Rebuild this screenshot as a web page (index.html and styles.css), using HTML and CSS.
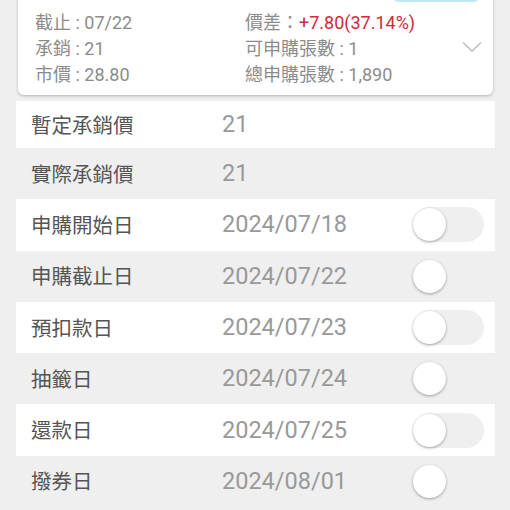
FILE: index.html
```html
<!DOCTYPE html>
<html lang="zh-Hant">
<head>
    <meta charset="UTF-8">
    <meta name="viewport" content="width=device-width, initial-scale=1.0">
    <title>申購資訊</title>
    <link rel="stylesheet" href="styles.css">
</head>
<body>
    <div class="card">
        <div class="card-head">
            <div class="tab-btn"></div>
        </div>
        <div class="card-body">
            <div class="info">截止 : 07/22</div>
            <div class="info">價差：<span class="up">+7.80(37.14%)</span></div>
            <div class="chevron">
                <svg width="20" height="12" viewBox="0 0 20 12"><path d="M1 1.5 L10 10 L19 1.5" fill="none" stroke="#bbb" stroke-width="1.5"/></svg>
            </div>
            <div class="info">承銷 : 21</div>
            <div class="info">可申購張數 : 1</div>
            <div class="info">市價 : 28.80</div>
            <div class="info">總申購張數 : 1,890</div>
        </div>
    </div>

    <div class="list">
        <div class="row white">
            <span class="label">暫定承銷價</span>
            <span class="value">21</span>
        </div>
        <div class="row">
            <span class="label">實際承銷價</span>
            <span class="value">21</span>
        </div>
        <div class="row white">
            <span class="label">申購開始日</span>
            <span class="value">2024/07/18</span>
            <span class="switch"><span class="knob"></span></span>
        </div>
        <div class="row">
            <span class="label">申購截止日</span>
            <span class="value">2024/07/22</span>
            <span class="switch"><span class="knob"></span></span>
        </div>
        <div class="row white">
            <span class="label">預扣款日</span>
            <span class="value">2024/07/23</span>
            <span class="switch"><span class="knob"></span></span>
        </div>
        <div class="row">
            <span class="label">抽籤日</span>
            <span class="value">2024/07/24</span>
            <span class="switch"><span class="knob"></span></span>
        </div>
        <div class="row white">
            <span class="label">還款日</span>
            <span class="value">2024/07/25</span>
            <span class="switch"><span class="knob"></span></span>
        </div>
        <div class="row">
            <span class="label">撥券日</span>
            <span class="value">2024/08/01</span>
            <span class="switch"><span class="knob"></span></span>
        </div>
    </div>
</body>
</html>
```

FILE: styles.css
```css
body {
    margin: 0;
    background-color: #efefef;
    font-family: Roboto, "Noto Sans CJK TC", sans-serif;
    overflow: hidden;
}
.card {
    margin: -44px 17px 0 18px;
    padding: 11px 11px 7px 17px;
    background-color: #fff;
    border-radius: 6px;
    box-shadow: 0 1px 3px rgba(0,0,0,0.25);
}
.card-head {
    display: flex;
    justify-content: flex-end;
    margin-bottom: 8px;
}
.tab-btn {
    width: 80px;
    height: 31px;
    margin-right: 4px;
    border: 2px solid #bfe6f2;
    border-radius: 4px;
}
.card-body {
    display: grid;
    grid-template-columns: 210px 1fr 20px;
}
.info {
    font-size: 18px;
    line-height: 26px;
    color: #8c8c8c;
}
.up {
    color: #d3283a;
}
.chevron {
    grid-column: 3;
    grid-row: 1 / span 3;
    display: flex;
    align-items: center;
    padding-bottom: 4px;
}
.list {
    margin: 6px 15px 0 16px;
}
.row {
    display: flex;
    align-items: center;
    height: 51.3px;
    padding: 0 11px 0 15px;
}
.row:first-child {
    height: 47px;
}
.row.white {
    background-color: #fff;
}
.label {
    width: 191px;
    font-size: 20.5px;
    color: #555;
    padding-bottom: 2px;
}
.value {
    flex: 1;
    font-size: 23.5px;
    color: #999;
    padding-bottom: 1px;
}
.switch {
    display: flex;
    align-items: center;
    width: 71px;
    height: 35px;
    border-radius: 18px;
    background-color: #efefef;
}
.knob {
    width: 33px;
    height: 33px;
    border-radius: 50%;
    background-color: #fff;
    box-shadow: 0 1px 3px rgba(0,0,0,0.35);
}
```
